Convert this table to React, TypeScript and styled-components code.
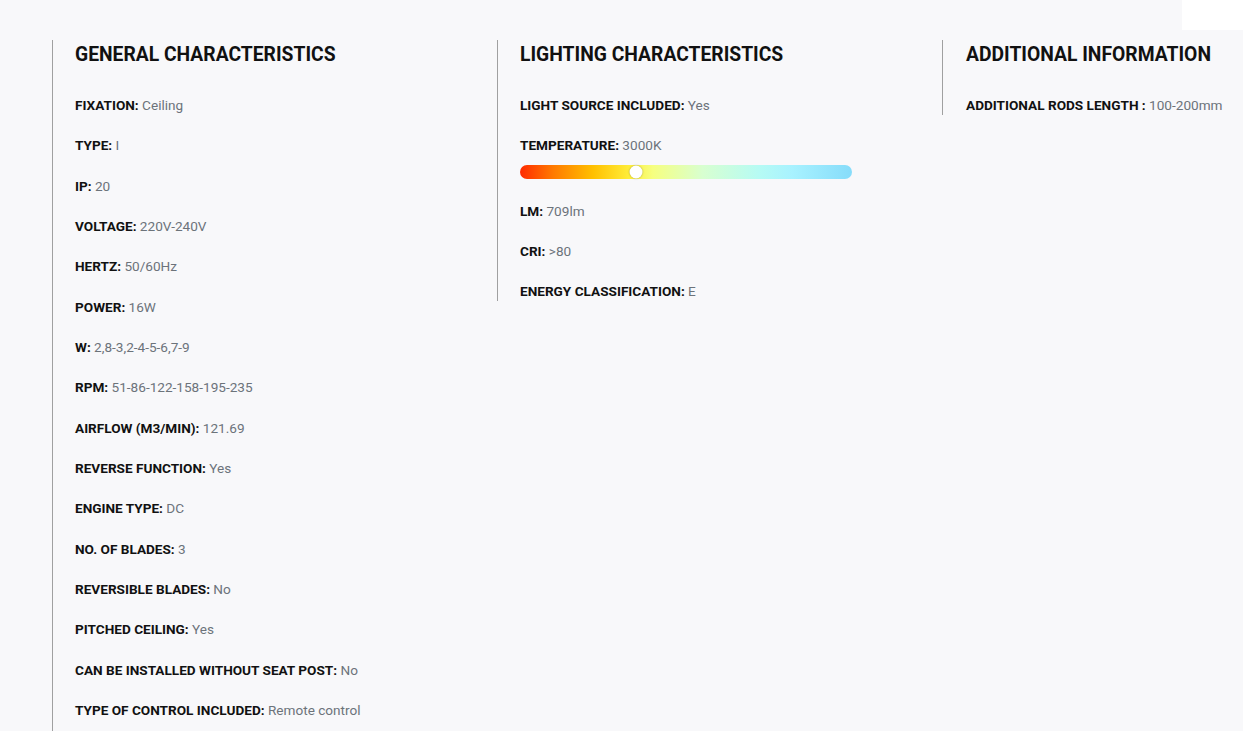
import React from "react";
import styled, { createGlobalStyle } from "styled-components";

const Global = createGlobalStyle`
  html, body { margin: 0; padding: 0; background: #f8f8fa; }
  body { font-family: Roboto, "Liberation Sans", Arial, sans-serif; }
`;

const Page = styled.div`
  position: relative;
  height: 731px;
  padding: 40px 0 0 52px;
  box-sizing: border-box;
  overflow: hidden;
`;

const Corner = styled.div`
  position: absolute;
  top: 0;
  right: 0;
  width: 61px;
  height: 30px;
  background: #ffffff;
`;

const Columns = styled.div`
  display: grid;
  grid-template-columns: 445px 445px 445px;
  align-items: start;
`;

const Column = styled.section<{ $tail?: number; $inset?: number }>`
  border-left: 1px solid #a0a0a0;
  padding-left: ${(p) => p.$inset ?? 22}px;
  padding-bottom: ${(p) => p.$tail ?? 0}px;
`;

const Heading = styled.h2`
  margin: 0 0 27px;
  padding-top: 2px;
  font-size: 19.3px;
  line-height: 26px;
  font-weight: 700;
  color: #111;
`;

const List = styled.div`
  display: flex;
  flex-direction: column;
  gap: 20.33px;
`;

const Row = styled.div`
  font-size: 13.6px;
  line-height: 20px;
  white-space: nowrap;
`;

const Label = styled.span`
  font-weight: 700;
  color: #111;
`;

const Value = styled.span`
  font-weight: 400;
  color: #6c737a;
`;

const Track = styled.div`
  position: relative;
  width: 332px;
  height: 14px;
  margin: 10px 0 1px;
  border-radius: 7px;
  background: linear-gradient(
    to right,
    #ff2a00 0%,
    #ff7a00 10%,
    #ffc000 22%,
    #ffee3a 33%,
    #f6ff80 40%,
    #d8ffd0 55%,
    #b6fbf4 72%,
    #a8f2ff 82%,
    #86dcfa 100%
  );
`;

const Thumb = styled.div`
  position: absolute;
  top: 50%;
  width: 13px;
  height: 13px;
  border-radius: 50%;
  background: #fff;
  box-shadow: 0 0 2px rgba(0, 0, 0, 0.35);
  transform: translate(-50%, -50%);
`;

type Item = [string, string];

const general: Item[] = [
  ["FIXATION:", "Ceiling"],
  ["TYPE:", "I"],
  ["IP:", "20"],
  ["VOLTAGE:", "220V-240V"],
  ["HERTZ:", "50/60Hz"],
  ["POWER:", "16W"],
  ["W:", "2,8-3,2-4-5-6,7-9"],
  ["RPM:", "51-86-122-158-195-235"],
  ["AIRFLOW (M3/MIN):", "121.69"],
  ["REVERSE FUNCTION:", "Yes"],
  ["ENGINE TYPE:", "DC"],
  ["NO. OF BLADES:", "3"],
  ["REVERSIBLE BLADES:", "No"],
  ["PITCHED CEILING:", "Yes"],
  ["CAN BE INSTALLED WITHOUT SEAT POST:", "No"],
  ["TYPE OF CONTROL INCLUDED:", "Remote control"],
];

const Spec = ({ label, value }: { label: string; value: string }) => (
  <Row>
    <Label>{label}</Label> <Value>{value}</Value>
  </Row>
);

export default function App() {
  return (
    <>
      <Global />
      <Page>
        <Corner />
        <Columns>
          <Column $tail={40}>
            <Heading>GENERAL CHARACTERISTICS</Heading>
            <List>
              {general.map(([l, v]) => (
                <Spec key={l} label={l} value={v} />
              ))}
            </List>
          </Column>
          <Column>
            <Heading>LIGHTING CHARACTERISTICS</Heading>
            <List>
              <Spec label="LIGHT SOURCE INCLUDED:" value="Yes" />
              <div>
                <Spec label="TEMPERATURE:" value="3000K" />
                <Track>
                  <Thumb style={{ left: "35%" }} />
                </Track>
              </div>
              <Spec label="LM:" value="709lm" />
              <Spec label="CRI:" value=">80" />
              <Spec label="ENERGY CLASSIFICATION:" value="E" />
            </List>
          </Column>
          <Column $inset={23}>
            <Heading>ADDITIONAL INFORMATION</Heading>
            <List>
              <Spec label="ADDITIONAL RODS LENGTH :" value="100-200mm" />
            </List>
          </Column>
        </Columns>
      </Page>
    </>
  );
}
